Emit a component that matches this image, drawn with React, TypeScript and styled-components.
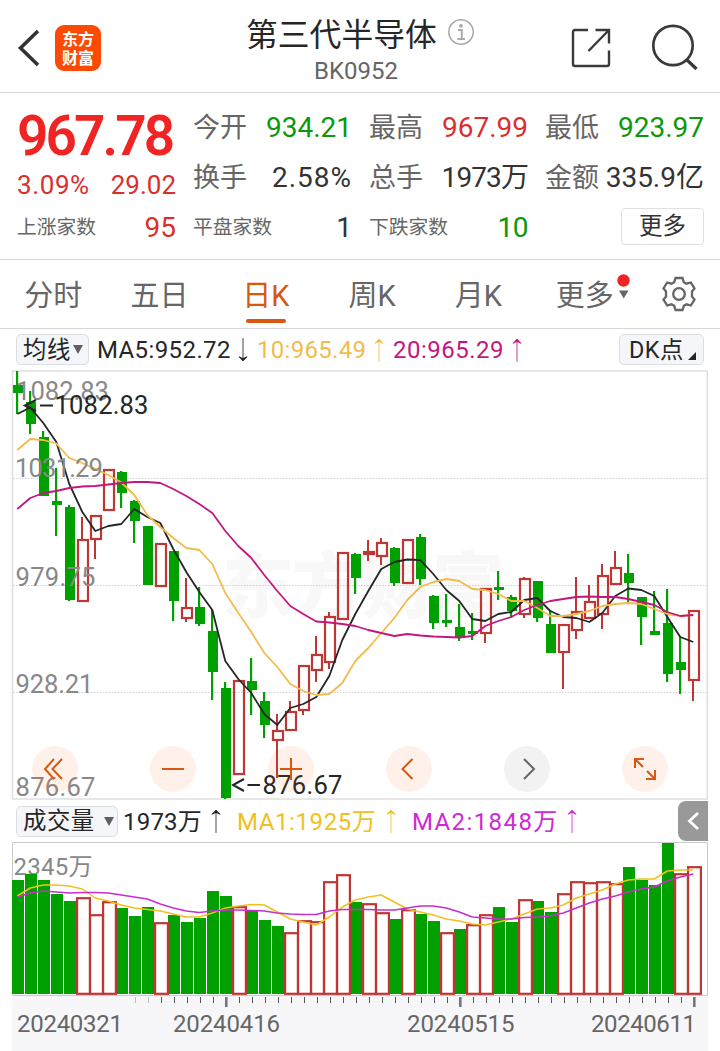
import React from 'react';
import styled, { createGlobalStyle } from 'styled-components';

const GlobalStyle = createGlobalStyle`
  * { box-sizing: border-box; }
  body {
    margin: 0;
    background: #fff;
    font-family: Roboto, "Noto Sans CJK SC", sans-serif;
  }
  svg { display: block; flex: none; }
`;

const RED = '#d9302e';
const GREEN = '#0c970c';
const UP = '#bf3735';
const DOWN = '#00a000';
const INK = '#262626';
const ORANGE = '#d9570f';
const YELLOW = '#f2bb4c';
const MAGENTA = '#c4177d';

const Page = styled.div`
  width: 720px;
  height: 1051px;
  overflow: hidden;
  display: flex;
  flex-direction: column;
  color: ${INK};
  background: #fff;
  white-space: nowrap;
`;

const Header = styled.header`
  height: 93px;
  display: grid;
  grid-template-columns: 200px 1fr 200px;
  border-bottom: 1px solid #d6d6d6;
`;

const HeaderLeft = styled.div`
  display: flex;
  align-items: center;
  gap: 15px;
  padding: 4px 0 0 17px;
`;

const Logo = styled.div`
  width: 46px;
  height: 46px;
  border-radius: 9px;
  background: #fc4a03;
  color: #fff;
  font: 700 16px/19px "Noto Sans CJK SC", sans-serif;
  display: flex;
  flex-direction: column;
  align-items: center;
  justify-content: center;
`;

const HeaderTitle = styled.div`
  display: flex;
  flex-direction: column;
  padding: 12px 0 0 46px;
`;

const TitleLine = styled.div`
  display: flex;
  align-items: center;
  gap: 10px;
  height: 40px;
  font-size: 31.8px;
`;

const Code = styled.div`
  padding-left: 68px;
  font-size: 24px;
  line-height: 39px;
  color: #666;
`;

const HeaderRight = styled.div`
  display: flex;
  align-items: center;
  justify-content: flex-end;
  gap: 40px;
  padding: 3px 22px 0 0;
`;

const Stats = styled.section`
  height: 167px;
  padding: 10px 16px 0 17px;
  display: grid;
  grid-template-columns: repeat(4, 159px);
  grid-template-rows: repeat(3, 50px);
  column-gap: 17px;
  border-bottom: 1px solid #d6d6d6;
`;

const PriceBlock = styled.div`
  grid-row: span 2;
  display: flex;
  flex-direction: column;
`;

const Price = styled.div`
  height: 63px;
  font-size: 55px;
  line-height: 66px;
  font-weight: 600;
  letter-spacing: -2.9px;
  color: #f02423;
`;

const Change = styled.div`
  display: flex;
  justify-content: space-between;
  font-size: 26px;
  line-height: 38px;
  color: ${RED};
`;

const Percent = styled.span`
  letter-spacing: 0.6px;
`;

const Cell = styled.div`
  display: flex;
  justify-content: space-between;
  line-height: 50px;
`;

const Label = styled.span<{ $small?: boolean }>`
  font-size: ${p => (p.$small ? 19.8 : 27)}px;
  color: #666;
`;

const Value = styled.span<{ $color?: string; $spacing?: number }>`
  font-size: 28px;
  letter-spacing: ${p => p.$spacing || 0}px;
  color: ${p => p.$color || '#333'};
`;

const MoreButton = styled.button`
  justify-self: end;
  align-self: center;
  width: 83px;
  height: 37px;
  margin-top: -4px;
  padding: 0;
  border: 1px solid #dfe0e2;
  border-radius: 4px;
  background: #fff;
  font: 23.5px/34px Roboto, "Noto Sans CJK SC", sans-serif;
  color: #333;
`;

const Tabs = styled.nav`
  height: 69px;
  display: flex;
  border-bottom: 1px solid #d6d6d6;
`;

const Tab = styled.div<{ $active?: boolean }>`
  position: relative;
  width: 106.3px;
  height: 68px;
  line-height: 72px;
  text-align: center;
  font-size: 29px;
  color: ${p => (p.$active ? ORANGE : '#666')};
  ${p => p.$active && `&::after {
    content: '';
    position: absolute;
    left: 33px;
    bottom: 5px;
    width: 40px;
    height: 4px;
    border-radius: 2px;
    background: ${ORANGE};
  }`}
`;

const TabMark = styled.svg`
  position: absolute;
  left: 86px;
  top: 14px;
`;

const GearCell = styled.div`
  display: flex;
  align-items: center;
  padding-left: 23px;
`;

const Bar = styled.div<{ $height: number }>`
  position: relative;
  height: ${p => p.$height}px;
  padding: 0 16px;
  display: flex;
  align-items: center;
  font-size: 24px;
  line-height: 30px;
`;

const Picker = styled.div<{ $width: number; $gap: number }>`
  width: ${p => p.$width}px;
  height: 31px;
  padding-left: 5px;
  display: flex;
  align-items: center;
  gap: ${p => p.$gap}px;
  border: 1px solid #dbdee3;
  border-radius: 5px;
  background: #f5f6f9;
  font-size: 23.4px;
  line-height: 29px;
`;

const PickerText = styled.span`
  padding: 1px 0 0 1px;
  letter-spacing: 0.5px;
`;

const Reading = styled.span<{ $color?: string; $left: number; $width: number; $spacing?: number }>`
  margin-left: ${p => p.$left}px;
  width: ${p => p.$width}px;
  padding-top: 1px;
  letter-spacing: ${p => p.$spacing || 0}px;
  color: ${p => p.$color || INK};
`;

const Spacer = styled.div`
  flex: 1;
`;

const ChartArea = styled.div`
  position: relative;
`;

const Controls = styled.div`
  position: absolute;
  left: 32px;
  bottom: 8px;
  display: flex;
  gap: 72px;
`;

const Round = styled.div<{ $muted?: boolean }>`
  width: 46px;
  height: 46px;
  border-radius: 50%;
  display: flex;
  align-items: center;
  justify-content: center;
  background: ${p => (p.$muted ? 'rgba(0,0,0,.05)' : 'rgba(250,95,20,.09)')};
`;

const Collapse = styled.div`
  position: absolute;
  right: 12px;
  top: 1px;
  width: 30px;
  height: 40px;
  border-radius: 8px 0 0 8px;
  background: #999;
  display: flex;
  align-items: center;
  justify-content: center;
`;

const Axis = styled.div`
  height: 55px;
  margin: 0 12px;
  background: #f7f7fa;
`;

// [rising, high, body top, body bottom, low]
type Candle = [number, number, number, number, number];
const candles: Candle[] = [
  [0, 371, 385, 393, 414], [0, 391, 402, 424, 434], [0, 431, 437, 496, 496], [0, 468, 501, 505, 536],
  [0, 505, 507, 600, 601], [1, 517, 539, 602, 602], [1, 515, 515, 540, 559], [1, 469, 469, 511, 511],
  [0, 471, 472, 493, 508], [0, 500, 501, 521, 543], [0, 526, 526, 585, 585], [1, 543, 543, 587, 587],
  [0, 551, 551, 601, 621], [1, 578, 607, 619, 622], [0, 587, 607, 624, 626], [0, 610, 631, 672, 700],
  [0, 682, 688, 798, 799], [1, 680, 680, 775, 775], [0, 658, 681, 690, 715], [0, 692, 701, 725, 738],
  [1, 714, 730, 741, 778], [1, 701, 711, 731, 731], [1, 665, 665, 711, 715], [1, 636, 654, 671, 682],
  [1, 612, 616, 663, 669], [1, 552, 552, 620, 620], [0, 553, 554, 578, 594], [1, 540, 551, 555, 561],
  [1, 538, 542, 557, 565], [0, 547, 548, 583, 586], [1, 539, 539, 584, 584], [0, 534, 537, 579, 585],
  [0, 595, 596, 623, 629], [0, 594, 620, 623, 627], [0, 604, 627, 638, 641], [0, 613, 631, 634, 640],
  [1, 588, 588, 634, 643], [0, 571, 587, 590, 600], [0, 595, 597, 611, 618], [1, 577, 578, 615, 618],
  [0, 581, 581, 618, 622], [0, 610, 624, 653, 653], [1, 624, 624, 653, 689], [1, 577, 611, 631, 639],
  [1, 585, 601, 619, 619], [1, 564, 575, 615, 629], [1, 551, 567, 585, 585], [0, 554, 573, 583, 603],
  [0, 597, 597, 617, 645], [0, 591, 631, 635, 635], [0, 589, 623, 674, 682], [0, 637, 662, 670, 694],
  [1, 610, 610, 681, 701],
];

const ma5 = [414, 407.5, 423, 442, 484, 512, 531, 526, 524, 509, 517, 523, 549, 572, 592, 610, 661, 679, 693, 714, 725, 708, 704, 697, 676, 640, 614, 591, 569, 562, 559.5, 560, 574, 590, 601, 619, 621, 614, 612, 600, 598, 611, 617, 618, 622, 613, 596, 588.5, 590, 596, 617, 637, 642];
const ma10 = [450, 439, 440, 443.5, 458, 463, 469, 475, 482.5, 495, 515, 527, 538, 548, 550, 564, 593, 613, 632, 653, 667, 684, 691, 695, 694, 683, 661, 648, 633, 618, 600, 587, 582, 579, 581, 589, 590, 594, 601, 601, 608, 616, 616, 614, 611, 606, 604, 603, 604, 609, 614, 616, 615];
const ma20 = [509, 498, 493, 491, 488, 486.5, 486, 484.5, 483, 482, 482, 483, 489, 496, 504, 513, 531, 546, 558, 575, 591, 606, 614, 621.5, 622.5, 624, 626, 630, 633, 636, 634, 635.5, 636.5, 637, 637.5, 636, 626, 621, 617, 610, 605, 601, 599, 597, 596.5, 597, 597, 599, 602, 605, 612, 616, 615];

const volumeTops = [880, 874, 880, 894, 901, 897, 914, 901, 908, 916, 907, 922, 915, 922, 918, 891, 896, 906, 911, 920, 926, 932, 920, 921, 881, 874, 902, 903, 912, 919, 909, 914, 921, 932, 929, 924, 914, 907, 922, 899, 901, 912, 893, 881, 882, 881, 883, 867, 880, 885, 843, 873, 866];
const volumeRed = new Set([5, 6, 7, 11, 17, 21, 22, 23, 24, 25, 27, 28, 30, 33, 35, 36, 39, 42, 43, 44, 45, 46, 51, 52]);
const volMa1 = [896, 888, 885, 885, 886, 889, 898, 901, 905, 908, 909.5, 911, 914, 917, 917, 913, 908, 906, 904.5, 905, 912, 919, 922, 925, 917, 907, 900, 897, 895, 902, 909, 912, 915, 919, 921, 924, 925, 922, 919, 914, 909, 908, 905, 898, 894, 890, 884, 880, 879, 879, 871, 870, 870];
const volMa2 = [897, 893, 891, 892, 893, 892.5, 892.5, 893, 895, 897, 899, 904, 908, 911, 912.5, 911, 910, 910, 910.5, 911, 913, 914, 914.5, 914.5, 911, 909.5, 909.5, 909.5, 910, 910, 908, 906, 906, 908, 912, 917, 918, 919, 919, 917.5, 917, 916, 913, 908, 903, 899, 896, 892, 889, 887, 881, 877, 874];

const points = (ys: number[]) => ys.map((y, i) => `${17.3 + 13 * i},${y}`).join(' ');

const Down = () => (
  <svg width="10" height="9" viewBox="0 0 10 9"><path d="M0 0H10L5 9Z" fill="#606060" /></svg>
);

const Arrow = ({ color, down }: { color: string; down?: boolean }) => (
  <svg width="10" height="26" viewBox="0 0 10 26">
    <g transform={down ? 'rotate(180 5 13)' : undefined} fill="none" stroke={color}>
      <path d="M5 3V25" strokeWidth="1.5" opacity=".55" />
      <path d="M1 6.3L5 2L9 6.3L5 4.5Z" fill={color} strokeWidth=".8" />
    </g>
  </svg>
);

const PriceChart = () => (
  <svg width="720" height="430" viewBox="0 370 720 430">
    <text x="222" y="612" textLength="282" fontSize="72" fontWeight="900" fill="#f8f8f8" fontFamily="Noto Sans CJK SC">东方财富</text>
    {[478.5, 585.5, 692.5].map(y => (
      <path key={y} d={`M13 ${y}H707`} stroke="#cfcfcf" strokeDasharray="1.5 1.5" />
    ))}
    <path d="M12.5 371H707.3V799H12.5Z" fill="none" stroke="#e0e0e0" strokeWidth="1.6" />
    {candles.map(([up, high, top, bottom, low], i) => {
      const x = 13 + 13 * i;
      const height = bottom - top;
      return up ? (
        <g key={i} fill={UP}>
          {high < top && <rect x={x + 3} y={high} width="2" height={top - high} />}
          {low > bottom && <rect x={x + 3} y={bottom} width="2" height={low - bottom} />}
          <rect x={x} y={top + 1} width="10" height={height - 2} fill="none" stroke={UP} strokeWidth="2.2" />
        </g>
      ) : (
        <g key={i} fill={DOWN}>
          <rect x={x + 3} y={high} width="2.2" height={low - high} />
          <rect x={x} y={top} width="10" height={height} />
        </g>
      );
    })}
    <g fill="none" strokeWidth="1.8" strokeLinejoin="round">
      <polyline points={points(ma5)} stroke={INK} />
      <polyline points={points(ma10)} stroke={YELLOW} />
      <polyline points={points(ma20)} stroke={MAGENTA} />
    </g>
    <g fontSize="25.6" fill="#888">
      <text x="16" y="399.5" textLength="93">1082.83</text>
      <text x="15" y="477" textLength="88">1031.29</text>
      <text x="15.5" y="585.5" textLength="80">979.75</text>
      <text x="15.5" y="692.5" textLength="78">928.21</text>
      <text x="15.5" y="795.5" textLength="80">876.67</text>
    </g>
    <g fontSize="25.6" fill={INK}>
      <path d="M36 400L25 405.5L36 411M40 405.5H53" fill="none" stroke={INK} strokeWidth="2" />
      <text x="54.5" y="413.5" textLength="94">1082.83</text>
      <path d="M244 779L233 785L244 791M247.5 785H260" fill="none" stroke={INK} strokeWidth="2" />
      <text x="262.5" y="793.5" textLength="80">876.67</text>
    </g>
  </svg>
);

const VolumeChart = () => (
  <svg width="720" height="154" viewBox="0 842 720 154">
    <path d="M12.5 842.5H707.5V995.5H12.5Z" fill="none" stroke="#c9c9c9" />
    <text x="13.5" y="875" fontSize="24" fill="#888" textLength="79">2345万</text>
    {volumeTops.map((y, i) =>
      volumeRed.has(i) ? null : <rect key={i} x={12 + 13 * i} y={y} width="12" height={994 - y} fill={DOWN} />
    )}
    {volumeTops.map((y, i) =>
      volumeRed.has(i) ? (
        <rect key={i} x={12.1 + 13 * i} y={y + 1.2} width="12.8" height={992.6 - y} fill="#fff" stroke={UP} strokeWidth="2.2" />
      ) : null
    )}
    <g fill="none" strokeWidth="1.5" strokeLinejoin="round">
      <polyline points={points(volMa1)} stroke="#f0c020" />
      <polyline points={points(volMa2)} stroke="#c62fcd" />
    </g>
  </svg>
);

const DateAxis = () => (
  <svg width="696" height="55" viewBox="12 996 696 55">
    {Array.from({ length: 44 }, (_, k) => {
      const major = k === 7 || k === 25 || k === 43;
      return (
        <rect
          key={k}
          x={135 + 13 * k - (major ? 1 : 0)}
          y="997"
          width={major ? 2.6 : 1}
          height={major ? 10 : 6}
          fill={k < 2 ? '#bbb' : major ? '#777' : '#555'}
        />
      );
    })}
    <g fontSize="24" fill="#666">
      <text x="17" y="1032" textLength="106">20240321</text>
      <text x="173" y="1032" textLength="107">20240416</text>
      <text x="407" y="1032" textLength="107.5">20240515</text>
      <text x="591" y="1032" textLength="105">20240611</text>
    </g>
  </svg>
);

const strokeProps = { fill: 'none', stroke: ORANGE, strokeWidth: 2 };

export default function App() {
  return (
    <Page>
      <GlobalStyle />
      <Header>
        <HeaderLeft>
          <svg width="23" height="38" viewBox="0 0 23 38"><path d="M21 2L3.5 19L21 36" fill="none" stroke="#333" strokeWidth="3.6" /></svg>
          <Logo><span>东方</span><span>财富</span></Logo>
        </HeaderLeft>
        <HeaderTitle>
          <TitleLine>
            第三代半导体
            <svg width="28" height="28" viewBox="0 0 28 28" fill="none" stroke="#aaa">
              <circle cx="14" cy="14" r="12.2" strokeWidth="1.5" />
              <circle cx="14" cy="7.8" r="1.9" fill="#aaa" stroke="none" />
              <path d="M11 12H14.8V20.5M10.5 21H18" strokeWidth="2" />
            </svg>
          </TitleLine>
          <Code>BK0952</Code>
        </HeaderTitle>
        <HeaderRight>
          <svg width="40" height="40" viewBox="0 0 40 40" fill="none" stroke="#3a3a3a" strokeWidth="2.4">
            <path d="M17 2H4Q2 2 2 4V36Q2 38 4 38H36Q38 38 38 36V22.5" />
            <path d="M24.5 2H38V15.5M37.5 2.5L17.5 23" />
          </svg>
          <svg width="47" height="47" viewBox="0 0 47 47" fill="none" stroke="#3a3a3a">
            <circle cx="22" cy="21.5" r="19.7" strokeWidth="2.7" />
            <path d="M35.5 35.5L45.5 45" strokeWidth="3.2" />
          </svg>
        </HeaderRight>
      </Header>

      <Stats>
        <PriceBlock>
          <Price>967.78</Price>
          <Change><Percent>3.09%</Percent><span>29.02</span></Change>
        </PriceBlock>
        <Cell><Label>今开</Label><Value $color={GREEN}>934.21</Value></Cell>
        <Cell><Label>最高</Label><Value $color={RED}>967.99</Value></Cell>
        <Cell><Label>最低</Label><Value $color={GREEN}>923.97</Value></Cell>
        <Cell><Label>换手</Label><Value $spacing={1}>2.58%</Value></Cell>
        <Cell><Label>总手</Label><Value $spacing={-0.9}>1973万</Value></Cell>
        <Cell><Label>金额</Label><Value $spacing={0}>335.9亿</Value></Cell>
        <Cell><Label $small>上涨家数</Label><Value $color={RED}>95</Value></Cell>
        <Cell><Label $small>平盘家数</Label><Value>1</Value></Cell>
        <Cell><Label $small>下跌家数</Label><Value $color={GREEN} $spacing={-0.5}>10</Value></Cell>
        <MoreButton>更多</MoreButton>
      </Stats>

      <Tabs>
        <Tab>分时</Tab>
        <Tab>五日</Tab>
        <Tab $active>日K</Tab>
        <Tab>周K</Tab>
        <Tab>月K</Tab>
        <Tab>
          更多
          <TabMark width="14" height="26" viewBox="0 0 14 26">
            <circle cx="6.5" cy="6.5" r="6.2" fill="#f02423" />
            <path d="M2 16.5H11.5L6.7 24.5Z" fill="#666" />
          </TabMark>
        </Tab>
        <GearCell>
          <svg width="36" height="36" viewBox="0 0 36 36" fill="none" stroke="#666" strokeWidth="2.3" strokeLinejoin="miter">
            <path d="M14.5 2H21.5L22.8 6.200L25.5 7.700L29.800 6.500L33.500 12.500L31 15.500V20.500L33.500 23.500L29.800 29.500L25.500 28.300L22.800 29.800L21.500 34H14.500L13.200 29.800L10.500 28.300L6.200 29.500L2.500 23.500L5 20.500V15.500L2.500 12.500L6.200 6.500L10.500 7.700L13.200 6.200Z" />
            <circle cx="18" cy="18" r="5.8" />
          </svg>
        </GearCell>
      </Tabs>

      <Bar $height={41}>
        <Picker $width={73} $gap={2}><PickerText>均线</PickerText><Down /></Picker>
        <Reading $left={8} $width={141} $spacing={0.4}>MA5:952.72</Reading>
        <Arrow color="#222" down />
        <Reading $left={9} $width={117} $spacing={0.3} $color={YELLOW}>10:965.49</Reading>
        <Arrow color={YELLOW} />
        <Reading $left={9} $width={119} $spacing={0.5} $color={MAGENTA}>20:965.29</Reading>
        <Arrow color={MAGENTA} />
        <Spacer />
        <Picker $width={85} $gap={4}>
          <PickerText>&#8202;DK点</PickerText>
          <svg width="8" height="24" viewBox="0 0 8 24"><path d="M8 14V22H0Z" fill={INK} /></svg>
        </Picker>
      </Bar>

      <ChartArea>
        <PriceChart />
        <Controls>
          <Round><svg width="24" height="24" viewBox="0 0 24 24" {...strokeProps}><path d="M11 2L2 12L11 22M19 2L9.5 12L19 22" /></svg></Round>
          <Round><svg width="22" height="22" viewBox="0 0 22 22" {...strokeProps}><path d="M0 11H22" /></svg></Round>
          <Round><svg width="22" height="22" viewBox="0 0 22 22" {...strokeProps}><path d="M0 11H22M11 0V22" /></svg></Round>
          <Round><svg width="22" height="22" viewBox="0 0 22 22" {...strokeProps}><path d="M14.5 1L4.5 11L14.5 21" /></svg></Round>
          <Round $muted><svg width="22" height="22" viewBox="0 0 22 22" {...strokeProps} stroke="#666"><path d="M8 1L18 11L8 21" /></svg></Round>
          <Round>
            <svg width="22" height="22" viewBox="0 0 22 22" {...strokeProps}>
              <path d="M10 1H1V10M1 1L9 9M12 21H21V12M21 21L13 13" />
            </svg>
          </Round>
        </Controls>
      </ChartArea>

      <Bar $height={42}>
        <Picker $width={102} $gap={9}><PickerText>成交量</PickerText><Down /></Picker>
        <Reading $left={5} $width={88} $spacing={0.2}>1973万</Reading>
        <Arrow color="#222" />
        <Reading $left={16} $width={149} $spacing={0.6} $color="#efc11f">MA1:1925万</Reading>
        <Arrow color="#efc11f" />
        <Reading $left={16} $width={155} $spacing={1.4} $color="#cf29d4">MA2:1848万</Reading>
        <Arrow color="#cf29d4" />
        <Collapse>
          <svg width="14" height="20" viewBox="0 0 14 20"><path d="M12 2L3.5 10L12 18" fill="none" stroke="#fff" strokeWidth="2.8" /></svg>
        </Collapse>
      </Bar>

      <VolumeChart />
      <Axis><DateAxis /></Axis>
    </Page>
  );
}
